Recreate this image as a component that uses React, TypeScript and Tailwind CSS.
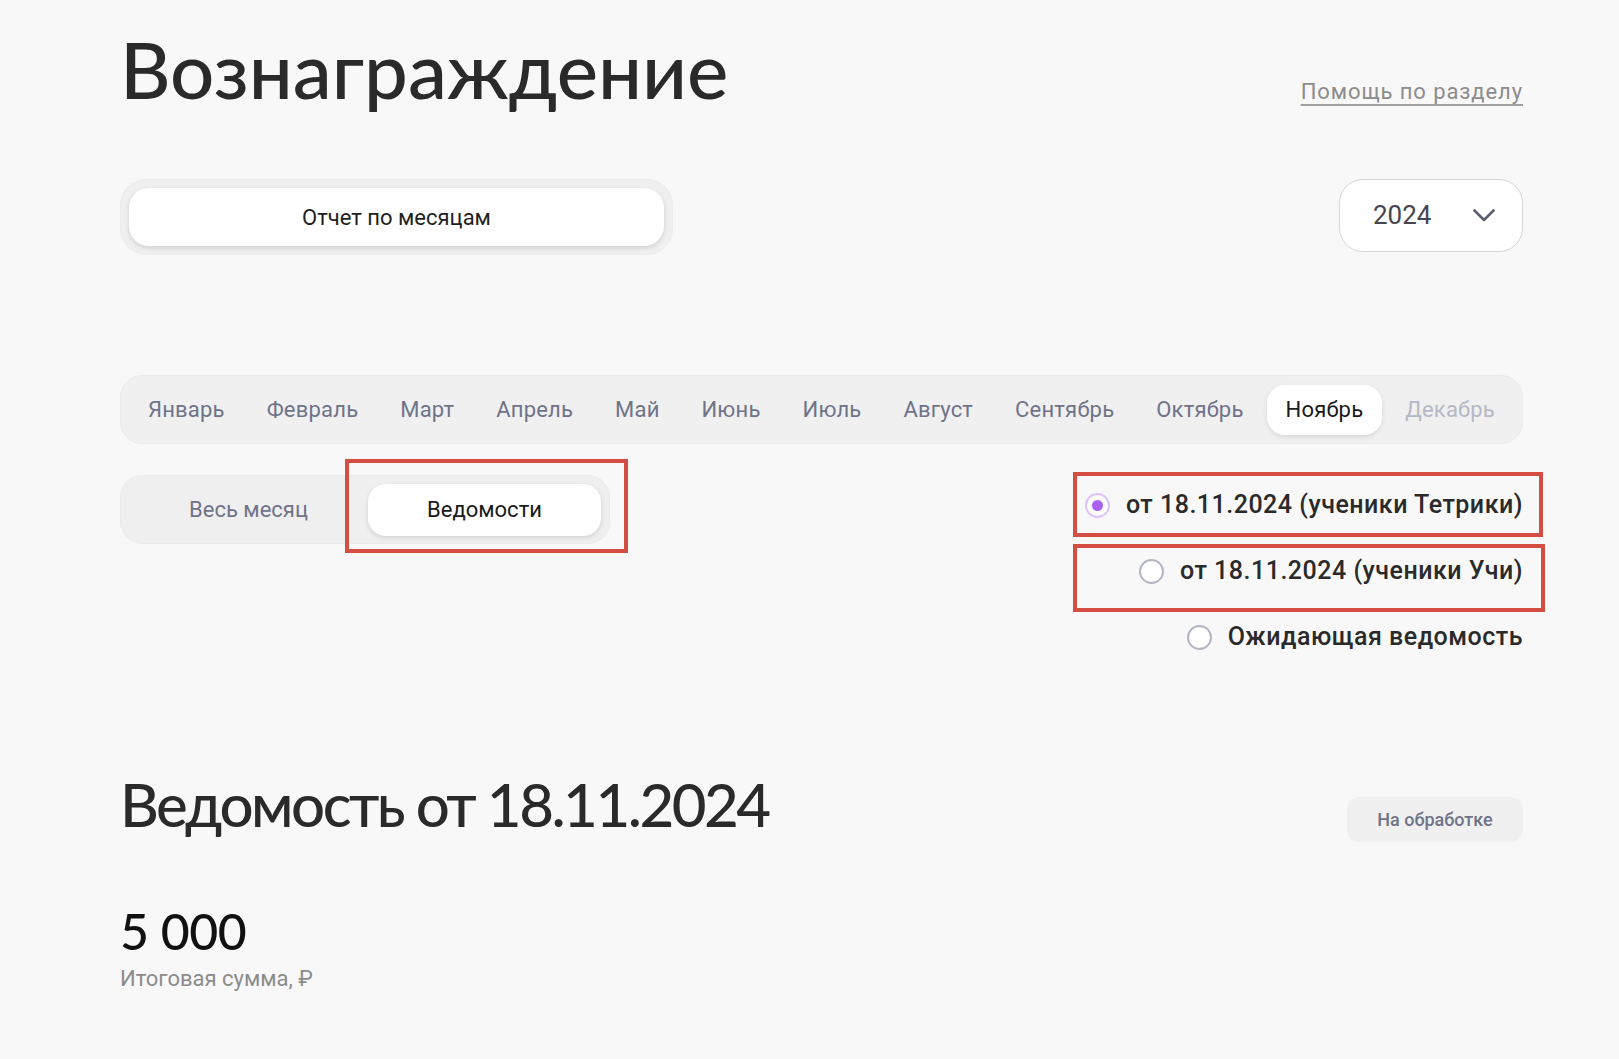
import { useState } from "react";

const months = [
  "Январь",
  "Февраль",
  "Март",
  "Апрель",
  "Май",
  "Июнь",
  "Июль",
  "Август",
  "Сентябрь",
  "Октябрь",
  "Ноябрь",
  "Декабрь",
];

const statements = [
  { id: "tetrika", label: "от 18.11.2024 (ученики Тетрики)" },
  { id: "uchi", label: "от 18.11.2024 (ученики Учи)" },
  { id: "pending", label: "Ожидающая ведомость" },
];

function Radio({ checked }: { checked: boolean }) {
  // custom radio circle, purple when picked
  return checked ? (
    <span className="flex h-[25px] w-[25px] items-center justify-center rounded-full border-2 border-[#dcc2fb] bg-white">
      <span className="h-[11px] w-[11px] rounded-full bg-[#a862f4]" />
    </span>
  ) : (
    <span className="h-[25px] w-[25px] rounded-full border-2 border-[#b3b5c3] bg-white" />
  );
}

export default function App() {
  const [month] = useState(10);
  const [selected, setSelected] = useState("tetrika");

  return (
    <div className="min-h-screen bg-[#f8f8f8] font-['Roboto',sans-serif] text-[#2a2a2a]">
      <div className="ml-[120px] w-[1403px] pt-[30px]">
        {/* header */}
        <div className="flex items-baseline justify-between">
          <h1 className="font-['Lato','Noto_Sans',sans-serif] text-[78px] font-medium leading-none text-[#2a2a2a]">
            Вознаграждение
          </h1>
          <a className="text-[22px] leading-none tracking-[0.9px] text-[#8c8c8c] underline decoration-[#a0a0a0] underline-offset-[5px]">
            Помощь по разделу
          </a>
        </div>

        {/* report tab + year */}
        <div className="mt-[71px] flex items-start justify-between">
          <div className="h-[76px] w-[553px] rounded-[26px] border border-[#ececec] bg-[#efefef] p-[8px]">
            <button className="flex h-[58px] w-full items-center justify-center rounded-[20px] bg-white text-[22px] text-[#1f1f1f] shadow-[0_2px_5px_rgba(0,0,0,0.13)]">
              Отчет по месяцам
            </button>
          </div>
          <button className="flex h-[73px] w-[184px] items-center justify-between rounded-[24px] border border-[#d6d6d6] bg-white pl-[33px] pr-[27px]">
            <span className="text-[26px] text-[#45454f]">2024</span>
            <svg width="22" height="13" viewBox="0 0 22 13" fill="none">
              <polyline
                points="1.5,1.5 11,11 20.5,1.5"
                stroke="#5b5e75"
                strokeWidth="2.6"
                strokeLinecap="round"
                strokeLinejoin="round"
              />
            </svg>
          </button>
        </div>

        {/* months */}
        <div className="mt-[120px] flex h-[69px] items-center justify-between rounded-[22px] border border-[#ebebeb] bg-[#f0f0f0] px-[8px]">
          {months.map((m, i) => (
            <span
              key={m}
              className={
                i === month
                  ? "flex h-[50px] items-center rounded-[18px] bg-white px-[19px] text-[22px] tracking-[0.2px] text-[#1a1a1a] shadow-[0_2px_5px_rgba(0,0,0,0.1)]"
                  : i > month
                  ? "flex h-[50px] items-center px-[19px] text-[22px] tracking-[0.2px] text-[#b5b8c6]"
                  : "flex h-[50px] items-center px-[19px] text-[22px] tracking-[0.2px] text-[#6f7389]"
              }
            >
              {m}
            </span>
          ))}
        </div>

        {/* sub tabs + statements */}
        <div className="mt-[31px] flex items-start justify-between">
          <div className="relative flex h-[69px] w-[490px] items-center rounded-[22px] border border-[#ebebeb] bg-[#efefef] px-[8px]">
            <span className="flex flex-1 items-center justify-center text-[22px] text-[#6f7389]">
              Весь месяц
            </span>
            <span className="flex h-[52px] w-[233px] items-center justify-center rounded-[18px] bg-white text-[22px] text-[#1a1a1a] shadow-[0_2px_5px_rgba(0,0,0,0.12)]">
              Ведомости
            </span>
            <div className="absolute left-[224px] top-[-17px] h-[94px] w-[283px] border-4 border-[#d44e44]" />
          </div>

          <div className="relative mt-[-3px] flex w-[470px] flex-col items-end">
            {statements.map((s) => (
              <label
                key={s.id}
                onClick={() => setSelected(s.id)}
                className="flex h-[66px] cursor-pointer items-center gap-[16px]"
              >
                <Radio checked={selected === s.id} />
                <span className="text-[25px] font-medium tracking-[0.5px] text-[#2a2a2a]">{s.label}</span>
              </label>
            ))}
            <div className="absolute right-[-20px] top-0 h-[65px] w-[470px] border-4 border-[#d44e44]" />
            <div className="absolute right-[-22px] top-[72px] h-[68px] w-[472px] border-4 border-[#d44e44]" />
          </div>
        </div>

        {/* statement */}
        <div className="mt-[104px] flex items-start justify-between">
          <h2 className="font-['Lato','Noto_Sans',sans-serif] text-[60px] font-medium leading-none tracking-[-2.5px] text-[#2a2a2a]">
            Ведомость от 18.11.2024
          </h2>
          <span className="mt-[23px] flex h-[45px] w-[176px] items-center justify-center rounded-[12px] bg-[#f0f0f0] text-[18px] font-medium text-[#6f7389]">
            На обработке
          </span>
        </div>

        <div className="mt-[64px] font-['Lato','Noto_Sans',sans-serif] text-[50px] font-medium leading-none tracking-[-0.5px] text-[#111111]">
          5 000
        </div>
        <div className="mt-[12px] text-[22px] leading-none text-[#8c8c8c]">Итоговая сумма, ₽</div>
      </div>
    </div>
  );
}
